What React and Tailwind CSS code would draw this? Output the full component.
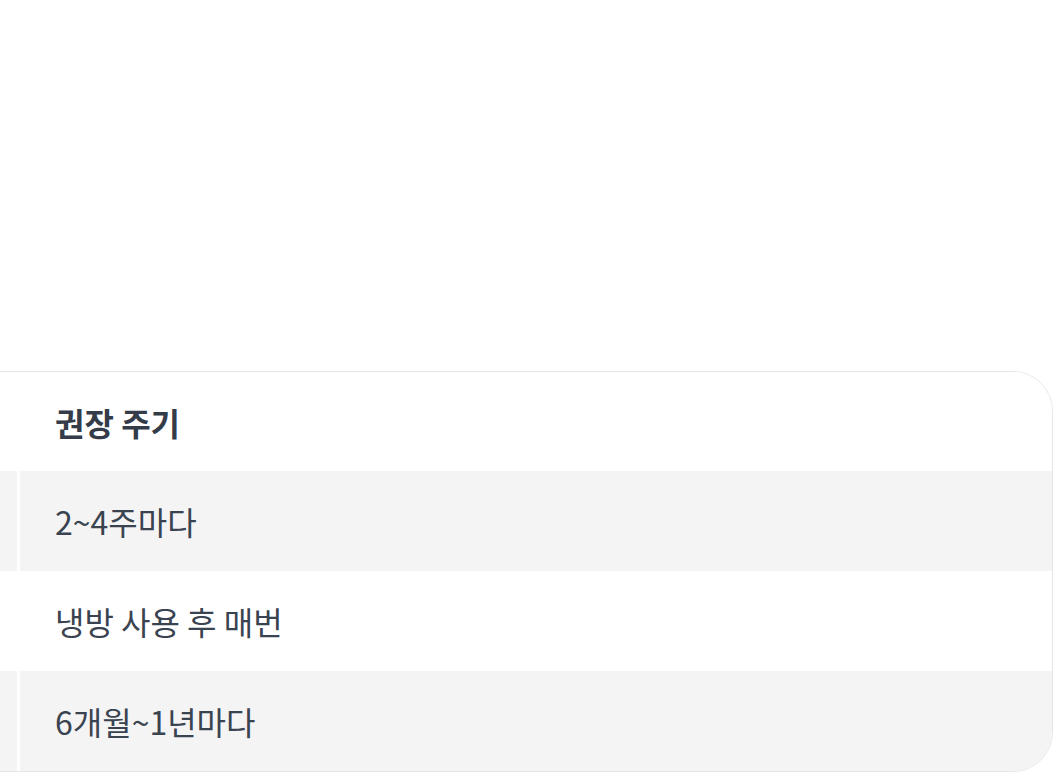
const rows = ["2~4주마다", "냉방 사용 후 매번", "6개월~1년마다"];

export default function App() {
  return (
    <div
      className="w-full min-h-screen bg-white overflow-hidden"
      style={{ fontFamily: '"Noto Sans CJK KR", "Noto Sans", sans-serif' }}
    >
      <div className="flex justify-end pt-[371px] pr-[11px]">
        <div className="shrink-0 w-[1297px] border border-[#e6e6e6] rounded-r-[40px] overflow-hidden">
          <div className="flex h-[99px] bg-white">
            <div className="w-[260px] shrink-0" />
            <div className="w-[3px] shrink-0 bg-white" />
            <div className="flex-1 flex items-center pl-[35px] text-[32px] font-bold text-[#333c48]">
              권장 주기
            </div>
          </div>
          {rows.map((cycle, i) => (
            <div
              key={cycle}
              className={`flex h-[100px] ${i % 2 === 0 ? "bg-[#f4f4f4]" : "bg-white"}`}
            >
              <div className="w-[260px] shrink-0" />
              <div className="w-[3px] shrink-0 bg-white" />
              <div className="flex-1 flex items-center pl-[35px] text-[32px] text-[#3a4350]">
                {cycle}
              </div>
            </div>
          ))}
        </div>
      </div>
    </div>
  );
}
